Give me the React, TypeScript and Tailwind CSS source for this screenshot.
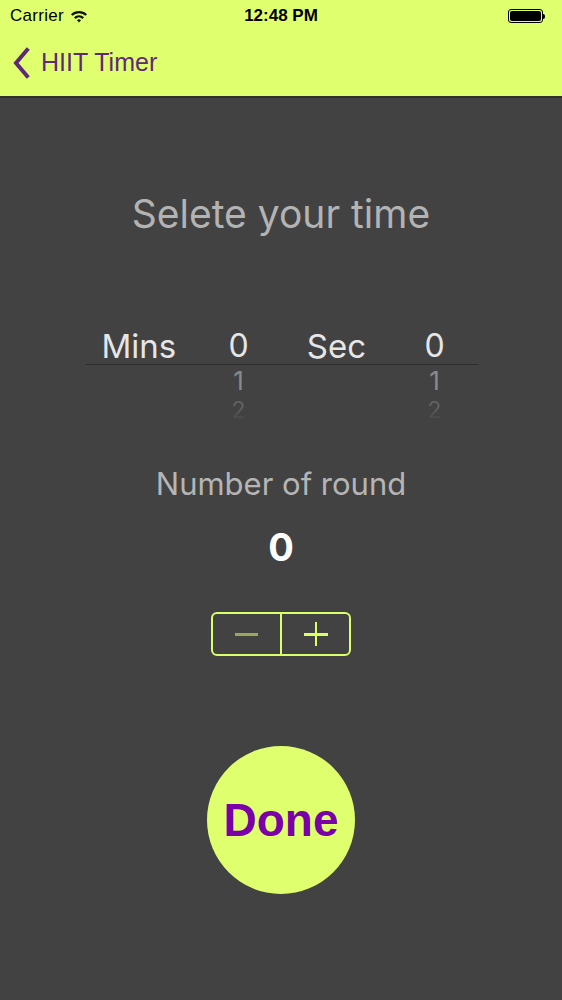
// HIIT Timer — time select screen

const SYS = { fontFamily: '"Liberation Sans", Arial, sans-serif' };
const BODY = { fontFamily: 'Inter, "Liberation Sans", Arial, sans-serif' };

function StatusBar() {
  return (
    <div className="relative flex h-[32px] items-center px-[10px] text-[17px] text-black" style={SYS}>
      <span className="tracking-[0.3px]">Carrier</span>
      <svg width="18" height="14" viewBox="0 0 18 14" className="ml-[6px]">
        <path d="M1 5.2a11.5 11.5 0 0 1 16 0l-1.5 1.6a9.3 9.3 0 0 0-13 0z" fill="#111" />
        <path d="M4 8.3a7.2 7.2 0 0 1 10 0l-1.6 1.6a5 5 0 0 0-6.8 0z" fill="#111" />
        <path d="M7 11.3a2.8 2.8 0 0 1 4 0L9 13.4z" fill="#111" />
      </svg>
      <span className="absolute left-1/2 -translate-x-1/2 font-bold">12:48 PM</span>
      <div className="ml-auto mr-[7px] flex items-center">
        <div className="flex h-[14px] w-[35px] items-center rounded-[3px] border border-black p-[1px]">
          <div className="h-full w-full rounded-[2px] bg-black" />
        </div>
        <div className="h-[5px] w-[2px] rounded-r-sm bg-black" />
      </div>
    </div>
  );
}

function NumberColumn() {
  return (
    <div className="flex flex-col items-center">
      <span className="h-[36px] text-[32px] leading-[36px] text-[#e6e6e6]">0</span>
      <span className="h-[34px] text-[26px] leading-[34px] text-[#8a8a8a]">1</span>
      <span className="h-[24px] bg-gradient-to-b from-[#626262] from-40% to-[#424242] bg-clip-text text-[23px] leading-[24px] text-transparent">
        2
      </span>
    </div>
  );
}

export default function App() {
  return (
    <div className="flex h-[1000px] w-[562px] flex-col bg-[#424242]" style={BODY}>
      <header className="h-[98px] border-b-2 border-[#2f2f2f] bg-[#dfff6f]">
        <StatusBar />
        <div className="flex h-[62px] items-center pl-[12px] text-[#5e2a78]" style={SYS}>
          <svg width="20" height="32" viewBox="0 0 20 32">
            <path d="M15 3 4 16l11 13" fill="none" stroke="#5e2a78" strokeWidth="4" strokeLinecap="square" />
          </svg>
          <span className="ml-[9px] text-[25px]">HIIT Timer</span>
        </div>
      </header>

      <h1 className="mt-[91px] text-center text-[39px] leading-[50px] text-[#b3b3b3]">
        Selete your time
      </h1>

      {/* time picker */}
      <div className="relative mx-auto mt-[89px] w-[393px]">
        <div className="absolute left-0 right-0 top-[36px] h-px bg-[#2e2e2e]" />
        <div className="flex items-start">
          <span className="ml-[17px] w-[73px] text-center text-[33px] leading-[36px] text-[#e6e6e6]">Mins</span>
          <div className="ml-[54px] w-[20px]"><NumberColumn /></div>
          <span className="ml-[58px] w-[60px] text-center text-[33px] leading-[36px] text-[#e6e6e6]">Sec</span>
          <div className="ml-[58px] w-[20px]"><NumberColumn /></div>
        </div>
      </div>

      <p className="mt-[42px] text-center text-[31px] leading-[40px] text-[#b5b5b5]">Number of round</p>
      <p className="mt-[20px] text-center text-[38px] font-bold leading-[46px] text-white">0</p>

      {/* stepper */}
      <div className="mx-auto mt-[42px] flex h-[44px] w-[140px] rounded-[6px] border-2 border-[#d9ff6a]">
        <button className="flex flex-1 items-center justify-center border-r-2 border-[#d9ff6a]">
          <span className="h-[3px] w-[23px] bg-[#9aa85e]" />
        </button>
        <button className="relative flex flex-1 items-center justify-center">
          <span className="absolute h-[3px] w-[24px] bg-[#d9ff6a]" />
          <span className="absolute h-[24px] w-[2px] bg-[#d9ff6a]" />
        </button>
      </div>

      <button
        className="mx-auto mt-[90px] flex size-[148px] items-center justify-center rounded-full bg-[#dfff6f] text-[46px] font-bold text-[#7a00a8]"
        style={SYS}
      >
        Done
      </button>
    </div>
  );
}
